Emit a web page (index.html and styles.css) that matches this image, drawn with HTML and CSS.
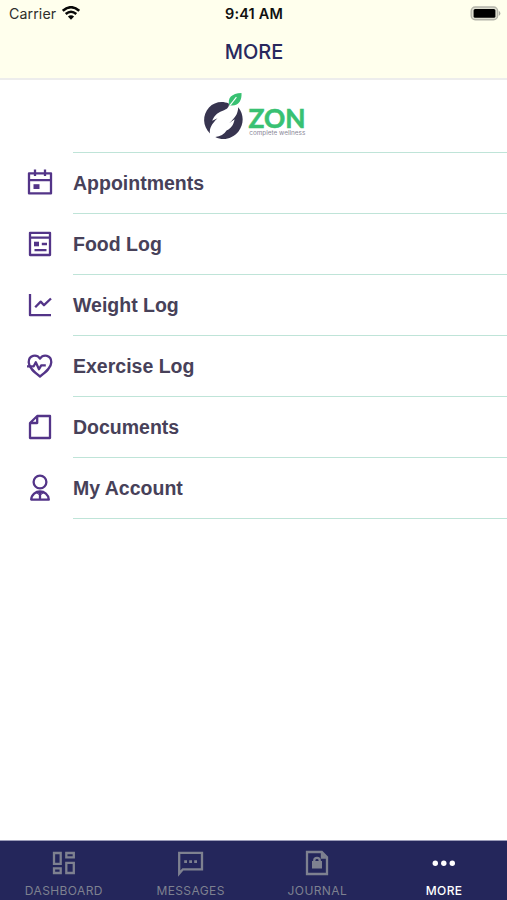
FILE: index.html
```html
<!DOCTYPE html>
<html lang="en">
<head>
<meta charset="utf-8">
<title>More</title>
<link rel="stylesheet" href="styles.css">
</head>
<body>
<div class="app">
  <header class="header">
    <div class="status">
      <div class="carrier"><span>Carrier</span>
        <svg class="wifi" width="18" height="14" viewBox="0 0 18 14" fill="none" stroke="#080808" stroke-width="2.5"><path d="M.8 4.8Q9-2.4 17.2 4.8M3.7 8Q9 3.4 14.3 8"/><path d="M9 13.7 5.9 10.6Q9 7.9 12.1 10.6Z" fill="#080808" stroke="none"/></svg>
      </div>
      <div class="clock">9:41 AM</div>
      <div class="power">
        <svg width="31" height="15" viewBox="0 0 31 15"><rect x="1.2" y="1" width="26.4" height="12.8" rx="4" fill="#deded0" stroke="#b4b4aa" stroke-width="1.4"/><rect x="3.6" y="3" width="21.8" height="8.8" rx="1.5" fill="#000"/><path d="M28.8 4.8Q32 7.4 28.8 10Z" fill="#aaaaa0"/></svg>
      </div>
    </div>
    <h1 class="title">MORE</h1>
  </header>
  <main class="content">
    <div class="brand">
      <svg width="104" height="48" viewBox="0 0 104 48" role="img" aria-label="ZON complete wellness">
        <path d="M26.8 11.5C20 8.5 12 10 7 15.5C.2 23 .5 34 8 41.5C7.2 36.5 9.5 32 15.5 26.2L10.2 28.8C12.5 22.5 17 20 22 18.2C25.8 16.6 27.5 14.5 26.8 11.5Z" fill="#37344f"/>
        <path d="M36.2 15.2C42 22 42.2 32 36.5 39.4C30.5 46.8 21 49 13.3 44.9C18.5 44.4 22 42.3 24.8 38.2C28.5 36.8 31.4 33.5 32.6 27.2L27.2 31.3C32.5 26 36 22.5 36.2 15.2Z" fill="#37344f"/>
        <path d="M27.3 13.4C25.2 6 29.5 1.4 39.5 1C40 8 37 14.3 28.8 13.5Z" fill="#38c172"/>
        <path d="M28 13.4 34.4 5.2" stroke="#fff" stroke-width="1.1" fill="none"/>
        <text class="brand-name" x="46.6" y="35.6" textLength="57" lengthAdjust="spacingAndGlyphs">ZON</text>
        <text class="brand-sub" x="47.3" y="43" textLength="56" lengthAdjust="spacingAndGlyphs">complete wellness</text>
      </svg>
    </div>
    <ul class="menu">
      <li class="item"><svg class="icon" viewBox="0 0 28 28"><path d="M3 4.3H25V24.4H3ZM3 11.2H25M9 .5V7M19 .5V7"/><path class="solid" d="M7.5 15.2H13.5V20H7.5Z"/></svg><span class="label">Appointments</span></li>
      <li class="item"><svg class="icon" viewBox="0 0 28 28"><path d="M4 2.8H24V25H4ZM4 7.6H24M15.8 14H21M8.5 20.2H20.5"/><path class="solid" d="M8 11.7H13V16.3H8Z"/></svg><span class="label">Food Log</span></li>
      <li class="item"><svg class="icon" viewBox="0 0 28 28"><path d="M4 3V24.2H25M9.2 16.3 14.7 10.6 18 14.2 25 7.5"/></svg><span class="label">Weight Log</span></li>
      <li class="item"><svg class="icon" viewBox="0 0 28 28"><path d="M14 24.5C8 20 2.7 15.8 2.7 10.3C2.7 3 10.6 1.8 14 6.6C17.4 1.8 25.3 3 25.3 10.3C25.3 15.8 20 20 14 24.5Z"/><path d="M1 14.3H7.7L9.8 10.3 13 17.3 15.2 13.4H19.8"/></svg><span class="label">Exercise Log</span></li>
      <li class="item"><svg class="icon" viewBox="0 0 28 28"><path d="M11.2 3H24V25H4V10ZM11.2 3V10H4"/></svg><span class="label">Documents</span></li>
      <li class="item"><svg class="icon" viewBox="0 0 28 28"><circle cx="14" cy="8" r="6.4"/><path d="M5.2 25.6C5.8 14.8 22.2 14.8 22.8 25.6ZM14 18V25.6"/><path d="M10.5 18.5 14 21 17.5 18.5" stroke-width="1.2"/></svg><span class="label">My Account</span></li>
    </ul>
  </main>
  <nav class="tabs">
    <a class="tab"><svg class="tab-icon" viewBox="0 0 28 28"><path d="M4 4H10.7V14.8H4ZM16.3 4H23.8V8.4H16.3ZM4 19.3H10.7V24H4ZM16.3 13.8H23.8V24H16.3Z"/></svg><span class="tab-label">DASHBOARD</span></a>
    <a class="tab"><svg class="tab-icon" viewBox="0 0 28 28"><path d="M2.2 3.9H25V20.3H5.9L2.2 24.6Z"/><path class="glyph" d="M7.2 11.3H10V14H7.2ZM12.2 11.3H15V14H12.2ZM17.2 11.3H20V14H17.2Z"/></svg><span class="tab-label">MESSAGES</span></a>
    <a class="tab"><svg class="tab-icon" viewBox="0 0 28 28"><path d="M4 3H18.8L24 8.2V25H4Z"/><path class="glyph" d="M17.8 3 24.5 9.7H17.8ZM9 12H19V19.4H9Z"/><path d="M11.3 13V11.3C11.3 8 16.7 8 16.7 11.3V13"/></svg><span class="tab-label">JOURNAL</span></a>
    <a class="tab active"><svg class="tab-icon" viewBox="0 0 28 28"><g class="glyph"><circle cx="5.3" cy="14.3" r="2.7"/><circle cx="13.8" cy="14.3" r="2.7"/><circle cx="22.3" cy="14.3" r="2.7"/></g></svg><span class="tab-label">MORE</span></a>
  </nav>
</div>
</body>
</html>
```
FILE: styles.css
```css
* { box-sizing: border-box; }
body { margin: 0; background: #fff; font-family: Inter, "Liberation Sans", sans-serif; }
.app { height: 900px; display: flex; flex-direction: column; overflow: hidden; }
.header { height: 80px; background: #ffffed; border-bottom: 2px solid #ededec; }
.status { height: 27px; display: grid; grid-template-columns: 1fr 1fr 1fr; align-items: center; padding: 0 6px 0 9px; }
.carrier { display: flex; align-items: center; gap: 6px; font-size: 14.2px; letter-spacing: .1px; color: #2e2e2b; }
.wifi { margin-bottom: 1px; }
.clock { padding-right: 2px; text-align: center; font-size: 14.5px; font-weight: 600; letter-spacing: .15px; color: #111; }
.power { display: flex; justify-content: flex-end; }
.title { margin: 0; height: 50px; line-height: 51px; padding-left: 1px; text-align: center; font-size: 20px; font-weight: 500; letter-spacing: 0; color: #28285d; }
.content { flex: 1; }
.brand { height: 72px; display: flex; justify-content: center; padding-top: 12px; }
.brand-name { font: 700 26.3px Lato, sans-serif; fill: #38c172; stroke: #38c172; stroke-width: .6px; }
.brand-sub { font: 400 6px Inter, sans-serif; fill: #8b8998; }
.menu { list-style: none; margin: 0 0 0 73px; padding: 0; border-top: 1px solid #bfe4d8; }
.item { height: 61px; border-bottom: 1px solid #bfe4d8; display: flex; align-items: center; gap: 19px; margin: 0; }
.icon { width: 28px; height: 28px; flex: none; margin-left: -47px; fill: none; stroke: #533488; stroke-width: 2.3; stroke-linejoin: round; }
.icon .solid { fill: #533488; stroke: none; }
.label { font: 700 19.5px/28px "Liberation Sans", sans-serif; color: #474159; }
.tabs { height: 60px; display: grid; grid-template-columns: repeat(4, 1fr); background: #24265b; border-top: 1px solid #9b9cb9; }
.tab { display: flex; flex-direction: column; align-items: center; padding: 8px 0 0 1px; color: #7e8190; }
.tab-icon { width: 28px; height: 28px; fill: none; stroke: currentColor; stroke-width: 2.3; }
.tab-icon .glyph { fill: currentColor; stroke: none; }
.tab-label { margin-top: 6px; font-size: 12px; line-height: 16px; letter-spacing: .4px; }
.active { color: #fff; }
.active .tab-label { font-weight: 500; }
```
